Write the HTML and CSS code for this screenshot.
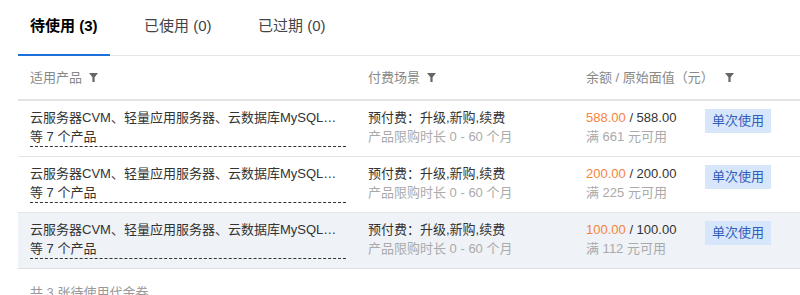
FILE: index.html
```html
<!DOCTYPE html>
<html lang="zh-CN">
<head>
    <meta charset="UTF-8">
    <meta name="viewport" content="width=device-width, initial-scale=1.0">
    <title>代金券</title>
    <link rel="stylesheet" href="styles.css">
</head>
<body>
    <div class="page">
        <div class="tabs">
            <div class="tab active">待使用 (3)</div>
            <div class="tab">已使用 (0)</div>
            <div class="tab">已过期 (0)</div>
        </div>

        <div class="table">
            <div class="row head">
                <div class="cell">适用产品 <svg class="filter" viewBox="0 0 9 9"><path d="M0 0H9L5.6 4.2V9H3.4V4.2Z"/></svg></div>
                <div class="cell">付费场景 <svg class="filter" viewBox="0 0 9 9"><path d="M0 0H9L5.6 4.2V9H3.4V4.2Z"/></svg></div>
                <div class="cell">余额 / 原始面值（元） <svg class="filter wide" viewBox="0 0 9 9"><path d="M0 0H9L5.6 4.2V9H3.4V4.2Z"/></svg></div>
                <div class="cell"></div>
            </div>

            <div class="row">
                <div class="cell"><span class="products">云服务器CVM、轻量应用服务器、云数据库MySQL…<br>等 7 个产品</span></div>
                <div class="cell">预付费：升级,新购,续费<br><span class="muted">产品限购时长 0 - 60 个月</span></div>
                <div class="cell"><span class="amount">588.00</span> / 588.00<br><span class="muted">满 661 元可用</span></div>
                <div class="cell"><span class="badge">单次使用</span></div>
            </div>

            <div class="row">
                <div class="cell"><span class="products">云服务器CVM、轻量应用服务器、云数据库MySQL…<br>等 7 个产品</span></div>
                <div class="cell">预付费：升级,新购,续费<br><span class="muted">产品限购时长 0 - 60 个月</span></div>
                <div class="cell"><span class="amount">200.00</span> / 200.00<br><span class="muted">满 225 元可用</span></div>
                <div class="cell"><span class="badge">单次使用</span></div>
            </div>

            <div class="row hover">
                <div class="cell"><span class="products">云服务器CVM、轻量应用服务器、云数据库MySQL…<br>等 7 个产品</span></div>
                <div class="cell">预付费：升级,新购,续费<br><span class="muted">产品限购时长 0 - 60 个月</span></div>
                <div class="cell"><span class="amount">100.00</span> / 100.00<br><span class="muted">满 112 元可用</span></div>
                <div class="cell"><span class="badge">单次使用</span></div>
            </div>
        </div>

        <p class="total">共 3 张待使用代金券</p>
    </div>
</body>
</html>
```

FILE: styles.css
```css
* {
    margin: 0;
    padding: 0;
    box-sizing: border-box;
}

body {
    background-color: #ffffff;
    font-family: "Liberation Sans", "Noto Sans CJK SC", sans-serif;
    font-size: 13px;
    color: #333;
    overflow: hidden;
}

.page {
    padding-left: 18px;
}

.tabs {
    display: flex;
    height: 56px;
    border-bottom: 1px solid #e3e6eb;
}

.tab {
    width: 92px;
    margin-right: 22px;
    margin-bottom: -1px;
    padding: 16px 0 0 12px;
    line-height: 20px;
    font-size: 15px;
    color: #444;
    border-bottom: 2px solid transparent;
}

.tab.active {
    color: #000;
    font-weight: bold;
    border-bottom-color: #1e6fd9;
}

.row {
    display: grid;
    grid-template-columns: 338px 218px 119px 1fr;
    border-bottom: 1px solid #e5e5e5;
    line-height: 19px;
}

.row .cell {
    padding: 7px 12px 9px;
    white-space: nowrap;
}

.row.head {
    height: 45px;
    border-bottom: 2px solid #e3e3e3;
    color: #888;
}

.row.head .cell {
    padding-top: 12px;
}

.row.hover {
    background-color: #eff2f6;
    border-bottom-color: #dcdfe3;
}

.filter {
    width: 9px;
    height: 9px;
    margin-left: 3px;
    fill: #666;
}

.filter.wide {
    margin-left: 8px;
}

.products {
    display: inline-block;
    width: 316px;
    border-bottom: 1px dashed #333;
}

.muted {
    color: #aaa;
}

.amount {
    color: #f5843b;
}

.badge {
    display: inline-block;
    margin-top: 1px;
    padding: 0 7px;
    height: 24px;
    line-height: 24px;
    background-color: #d7e6fb;
    color: #2f5fbd;
}

.total {
    margin: 14px 0 0 12px;
    color: #999;
    line-height: 19px;
}
```
